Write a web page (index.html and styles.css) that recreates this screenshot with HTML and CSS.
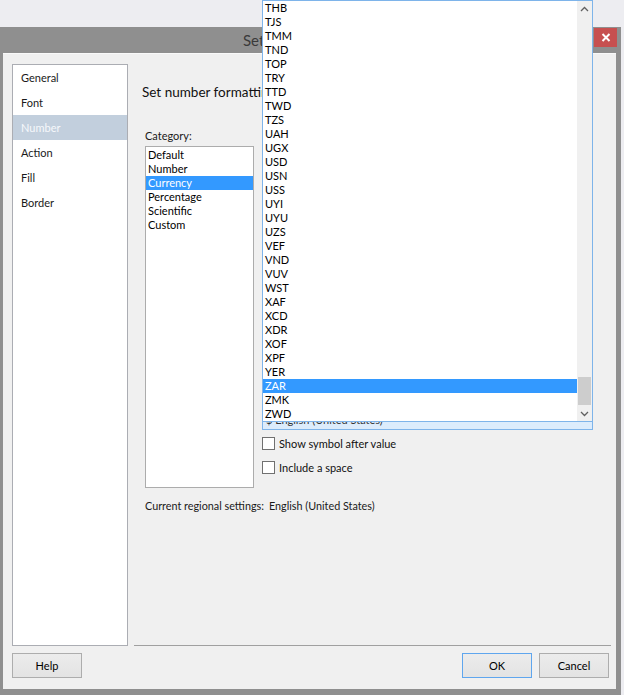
FILE: index.html
```html
<!DOCTYPE html>
<html>
<head>
<meta charset="utf-8">
<link rel="stylesheet" href="styles.css">
</head>
<body>
<div class="desk"></div>
<div class="window">
  <div class="titlebar">
    <span class="title">Settings</span>
    <span class="close"><svg width="10" height="9" viewBox="0 0 10 9"><path d="M1.5 1 L8.5 8 M8.5 1 L1.5 8" stroke="#fff" stroke-width="2"/></svg></span>
  </div>
  <div class="dlg">
    <div class="content">
      <ul class="nav">
        <li>General</li>
        <li>Font</li>
        <li class="sel">Number</li>
        <li>Action</li>
        <li>Fill</li>
        <li>Border</li>
      </ul>
      <div class="main">
        <div class="heading">Set number formatting</div>
        <div class="cols">
          <div class="catcol">
            <div class="label">Category:</div>
            <ul class="listbox">
              <li>Default</li>
              <li>Number</li>
              <li class="sel">Currency</li>
              <li>Percentage</li>
              <li>Scientific</li>
              <li>Custom</li>
            </ul>
          </div>
          <div class="optcol">
            <div class="combo">$ English (United States)</div>
            <div class="check first"><span class="box"></span>Show symbol after value</div>
            <div class="check second"><span class="box"></span>Include a space</div>
          </div>
        </div>
        <div class="regional"><span class="rlabel">Current regional settings:</span><span>English (United States)</span></div>
      </div>
    </div>
    <div class="buttons">
      <button class="btn">Help</button>
      <span class="spacer"></span>
      <button class="btn default">OK</button>
      <button class="btn">Cancel</button>
    </div>
  </div>
</div>
<div class="popup">
  <ul class="items">
    <li>THB</li><li>TJS</li><li>TMM</li><li>TND</li><li>TOP</li><li>TRY</li><li>TTD</li><li>TWD</li><li>TZS</li><li>UAH</li>
    <li>UGX</li><li>USD</li><li>USN</li><li>USS</li><li>UYI</li><li>UYU</li><li>UZS</li><li>VEF</li><li>VND</li><li>VUV</li>
    <li>WST</li><li>XAF</li><li>XCD</li><li>XDR</li><li>XOF</li><li>XPF</li><li>YER</li><li class="sel">ZAR</li><li>ZMK</li><li>ZWD</li>
  </ul>
  <div class="scroll">
    <div class="arrow"><svg width="9" height="6" viewBox="0 0 9 6"><path d="M1 5 L4.5 1.5 L8 5" fill="none" stroke="#606060" stroke-width="1.3"/></svg></div>
    <div class="track"></div>
    <div class="thumb"></div>
    <div class="arrow down"><svg width="9" height="6" viewBox="0 0 9 6"><path d="M1 1 L4.5 4.5 L8 1" fill="none" stroke="#606060" stroke-width="1.3"/></svg></div>
  </div>
</div>
</body>
</html>
```
FILE: styles.css
```css
* { box-sizing: border-box; }
html, body { margin: 0; padding: 0; }
body {
  width: 624px;
  height: 695px;
  overflow: hidden;
  background: #ededf1;
  font-family: Lato, "Liberation Sans", sans-serif;
  font-size: 11px;
  color: #1a1a1a;
  position: relative;
}
ul { list-style: none; margin: 0; padding: 0; }

.desk { height: 27px; }

.window {
  width: 621px;
  height: 668px;
  background: #8f8f8f;
  padding-bottom: 6px;
}
.titlebar {
  height: 26px;
  display: flex;
  align-items: flex-start;
}
.title {
  padding-left: 243px;
  line-height: 26px;
  font-size: 15px;
  color: #3a3a3a;
}
.close {
  margin-left: auto;
  margin-right: 4px;
  margin-top: 1px;
  width: 23px;
  height: 19px;
  background: #c75050;
  display: flex;
  align-items: center;
  justify-content: center;
}

.dlg {
  margin: 0 5px 0 3px;
  height: 636px;
  background: #f0f0f0;
  border-top: 1px solid #f9f9f9;
  padding: 10px 7px 0 9px;
}
.content {
  display: flex;
  height: 582px;
}
.nav {
  width: 116px;
  background: #fff;
  border: 1px solid #abadb3;
}
.nav li {
  height: 25px;
  line-height: 25px;
  padding-left: 8px;
}
.nav li.sel {
  background: #c2cfdd;
  color: #f6f8fb;
}
.main {
  flex: 1;
  margin-left: 6px;
  margin-right: -2px;
  border-bottom: 1px solid #a0a0a0;
  padding: 19px 0 0 11px;
}
.heading {
  margin-left: -3px;
  font-size: 13.5px;
  line-height: 18px;
  color: #111;
}
.cols {
  display: flex;
  gap: 8px;
  margin-top: 28px;
}
.catcol { width: 109px; }
.label { line-height: 14px; margin-bottom: 3px; }
.listbox {
  height: 342px;
  background: #fff;
  border: 1px solid #acacac;
  padding-top: 1px;
}
.listbox li {
  line-height: 14px;
  height: 14px;
  padding-left: 2px;
  color: #000;
}
.listbox li.sel, .items li.sel {
  background: #3399ff;
  color: #fff;
}
.optcol { width: 331px; }
.combo {
  margin-top: 281px;
  height: 20px;
  line-height: 18px;
  border: 1px solid #7eb4ea;
  background: #dcecfc;
  padding-left: 3px;
  color: #333;
}
.check {
  display: flex;
  align-items: center;
  height: 13px;
  color: #111;
}
.check.first { margin-top: 7px; }
.check.second { margin-top: 11px; }
.box {
  width: 13px;
  height: 13px;
  border: 1px solid #707070;
  background: #fff;
  margin-right: 4px;
}
.regional {
  margin-top: 11px;
  line-height: 14px;
  font-size: 10.8px;
}
.rlabel {
  display: inline-block;
  width: 124px;
}

.buttons {
  display: flex;
  gap: 7px;
  margin-top: 7px;
}
.spacer { flex: 1; }
.btn {
  width: 70px;
  height: 25px;
  font: inherit;
  color: #000;
  background: linear-gradient(#ececec, #e3e3e3);
  border: 1px solid #adadad;
  padding: 0;
}
.btn.default { border-color: #5fa6ee; }

.popup {
  position: absolute;
  left: 262px;
  top: 0;
  width: 331px;
  height: 422px;
  border: 1px solid #7eb4ea;
  background: #fff;
  display: flex;
}
.items { width: 314px; }
.items li {
  height: 14px;
  line-height: 14px;
  padding-left: 2px;
  color: #000;
}
.scroll {
  width: 15px;
  background: #f0f0f0;
  display: flex;
  flex-direction: column;
  align-items: center;
}
.arrow {
  height: 16px;
  width: 15px;
  display: flex;
  align-items: center;
  justify-content: center;
}
.arrow.down { height: 15px; }
.track { flex: 1; }
.thumb {
  width: 13px;
  height: 28px;
  background: #cdcdcd;
  margin-bottom: 1px;
}
```
